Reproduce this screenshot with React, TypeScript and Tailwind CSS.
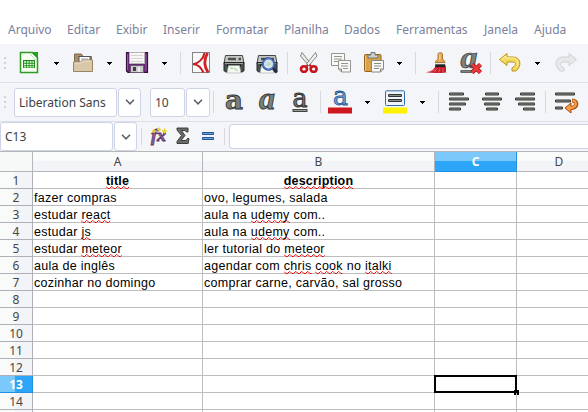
import React from "react";

const UI = "font-['Noto_Sans',sans-serif]";
const SHEET = "font-['Liberation_Sans',Arial,sans-serif]";

function Icon({ className, children }: { className: string; children: React.ReactNode }) {
  return (
    <svg viewBox="0 0 24 24" className={`h-6 w-6 shrink-0 overflow-visible ${className}`} fill="none">
      {children}
    </svg>
  );
}

function Grip() {
  return (
    <div className="ml-1 flex w-[2px] shrink-0 flex-col gap-[3px]">
      <i className="h-[2px] bg-[#d0d4e2]" />
      <i className="h-[2px] bg-[#d0d4e2]" />
      <i className="h-[2px] bg-[#d0d4e2]" />
    </div>
  );
}

function Arrow({ className }: { className: string }) {
  return (
    <svg viewBox="0 0 5 3" className={`h-[3px] w-[5px] shrink-0 ${className}`} shapeRendering="crispEdges">
      <path d="M0 0h5v1H4v1H3v1H2V2H1V1H0z" fill="#000" />
    </svg>
  );
}

function Sep({ className }: { className: string }) {
  return <div className={`w-px shrink-0 bg-[#d6d9de] ${className}`} />;
}

function Box({ className, children }: { className: string; children?: React.ReactNode }) {
  return (
    <div className={`flex shrink-0 items-center whitespace-nowrap rounded-[3px] border border-[#cdd4e6] bg-white text-[12px] text-[#3b3f4a] ${className}`}>
      {children}
    </div>
  );
}

function Chevron() {
  return (
    <svg viewBox="0 0 10 6" className="mx-auto h-[6px] w-[10px]" fill="none">
      <path d="M1 .8l4 4 4-4" stroke="#5c616c" strokeWidth="1.6" />
    </svg>
  );
}

function Lines({ rows }: { rows: [number, number, number][] }) {
  return (
    <>
      {rows.map(([x, y, w]) => (
        <g key={y}>
          <rect x={x} y={y} width={w} height="3" rx="1.2" fill="#30322f" />
          <path d={`M${x + 1} ${y + 1.5}h${w - 2}`} stroke="#8b8d88" strokeWidth="1" />
        </g>
      ))}
    </>
  );
}

function Printer() {
  return (
    <>
      <path d="M3.500 3.500h17l1.500 8H2z" fill="#c3c6c3" stroke="#444844" />
      <path d="M6 7h8M16.500 7H19" stroke="#4c514d" strokeWidth="2.500" />
      <path d="M2 10.500h20v8l-1.500 1.500h-17L2 18.500z" fill="#4a504d" stroke="#222624" />
      <path d="M3 11.500h18" stroke="#9aa19d" />
      <path d="M5 13.500h14" stroke="#151817" strokeWidth="2" />
      <path d="M6.500 13.500h11l1.500 7.500H5z" fill="#f4f7f2" stroke="#a5aaa4" strokeWidth=".6" />
      <path d="M8.500 15.500l2.500 1.500M12 16l3.500 3" stroke="#b3dcb2" strokeWidth="1.600" />
    </>
  );
}

const menus: [string, string][] = [
  ["Arquivo", "w-[59px]"],
  ["Editar", "w-[49px]"],
  ["Exibir", "w-[47px]"],
  ["Inserir", "w-[53px]"],
  ["Formatar", "w-[68px]"],
  ["Planilha", "w-[60px]"],
  ["Dados", "w-[52px]"],
  ["Ferramentas", "w-[88px]"],
  ["Janela", "w-[50px]"],
  ["Ajuda", "w-[40px]"],
];

function MenuBar() {
  return (
    <nav className="flex h-[44px] shrink-0 pl-2 pt-[20px] text-[12px] leading-[20px] text-[#7a819c]">
      {menus.map(([name, w]) => (
        <span key={name} className={`shrink-0 whitespace-nowrap ${w}`}>{name}</span>
      ))}
    </nav>
  );
}

function StandardBar() {
  return (
    <div className="flex h-[39px] shrink-0 items-center border-b border-[#dce0e9] bg-[#f4f5f8]">
      <Grip />
      <Icon className="ml-[11px]">
        <path d="M3.500 1.500h12l5 5v15h-17z" fill="#f8fff5" stroke="#2f9a25" strokeWidth="1.500" />
        <path d="M14 1h7v7z" fill="#2b9e25" />
        <path d="M12 2l8 8" stroke="#b3e2a6" />
        <rect x="6" y="9" width="12" height="8" fill="#218c19" />
        <path d="M7 11h10M7 13.500h10M7 15.800h10" stroke="#e4ffdc" strokeWidth="1.300" />
        <path d="M9.500 9v8M12.200 9v8M15 9v8" stroke="#218c19" strokeWidth=".8" />
      </Icon>
      <Arrow className="ml-[13px]" />
      <Icon className="ml-[12px]">
        <path d="M3.500 19V3h7l1.500 2.500h8.500V20z" fill="#a78f6b" stroke="#816b4c" />
        <rect x="8" y="5.500" width="11" height="8" fill="#fff" stroke="#4e5557" />
        <path d="M10 8h7" stroke="#9ca3a4" />
        <path d="M2.500 11h7l2-2h10v11.500h-19z" fill="#d8c7a8" stroke="#9b8664" />
        <path d="M3.500 12h6.500l2-2h8.500" stroke="#eee3ce" />
      </Icon>
      <Arrow className="ml-[12px]" />
      <Icon className="ml-[13px]">
        <path d="M1.500 1.500h21v20H3l-1.500-1.500z" fill="#672675" stroke="#35113f" strokeWidth="1.200" />
        <path d="M2.500 3v16M21 3v17" stroke="#9657a2" />
        <rect x="4.500" y="1.500" width="15" height="11" fill="#f7f7f6" stroke="#b8b1b9" />
        <path d="M6 4.500h12M6 7.500h12M6 10.500h12" stroke="#d5d3d3" />
        <rect x="5.500" y="14.500" width="13" height="7" fill="#c9cbc8" stroke="#6a5b6c" />
        <rect x="8" y="16" width="3" height="4" fill="#4d364f" />
        <path d="M14 16v5" stroke="#eee" strokeWidth="2" />
      </Icon>
      <Arrow className="ml-[13px]" />
      <Sep className="ml-[13px] h-[22px]" />
      <Icon className="ml-[8px]">
        <rect x="3.500" y="1.500" width="17" height="20" fill="#f9f9f9" stroke="#858585" />
        <path d="M15.500 2C14.500 8 9 12.500 4 13.500M4 13c6 .5 8 4 10.500 8.500" stroke="#c61c20" strokeWidth="2" />
        <path d="M18.500 2C15 8 15 15 19 21.500" stroke="#ce2226" strokeWidth="2.800" />
      </Icon>
      <Icon className="ml-[9px]"><g transform="translate(0 1)"><Printer /></g></Icon>
      <Icon className="ml-[9px]">
        <g transform="translate(0 1)"><Printer /></g>
        <circle cx="13.500" cy="13" r="5.700" fill="#d6e5f6" fillOpacity=".95" stroke="#234a9b" strokeWidth="2" />
        <circle cx="13.500" cy="13" r="5.500" stroke="#7f9fd8" strokeWidth=".7" />
        <path d="M11.500 14l2-3 2.500 2-2 2z" fill="#b5dcac" />
        <path d="M18 17.500l4 4" stroke="#202c46" strokeWidth="2.600" />
      </Icon>
      <Sep className="ml-[8px] h-[22px]" />
      <Icon className="ml-[9px]">
        <path d="M5 1.500L3.500 5l8.500 10 2-2z" fill="#e8eae7" stroke="#83887f" />
        <path d="M18.500 1.500L20 5l-8.500 10-2-2z" fill="#f1f3f0" stroke="#83887f" />
        <ellipse cx="7" cy="18" rx="3" ry="2.800" stroke="#c9141b" strokeWidth="2.600" />
        <ellipse cx="16.600" cy="18" rx="3" ry="2.800" stroke="#c9141b" strokeWidth="2.600" />
        <path d="M9 16l2-2M14.500 16l-2-2" stroke="#bd2026" strokeWidth="2" />
      </Icon>
      <Icon className="ml-[8px]">
        <path d="M2.500 2.500h13v12h-13z" fill="#f9f9f8" stroke="#939591" />
        <path d="M5 5.500h8M5 8h8M5 10.500h6" stroke="#92948f" />
        <path d="M9.500 9.500h12V21h-9l-3-3z" fill="#f9f9f8" stroke="#939591" />
        <path d="M12 12.500h7M12 15h7M14 17.500h5" stroke="#92948f" />
        <path d="M9.500 18h3v3" stroke="#838580" />
      </Icon>
      <Icon className="ml-[9px]">
        <rect x="2.500" y="3.500" width="16.500" height="17" rx="1" fill="#d9a14b" stroke="#92611d" />
        <path d="M3.500 5v14.500" stroke="#efc57e" />
        <path d="M6 7V4h3V1.500h4V4h3v3z" fill="#cdd0cd" stroke="#70746e" />
        <path d="M9.500 9.500h12V18l-3 3h-9z" fill="#fafaf9" stroke="#868883" />
        <path d="M12 12.500h7M12 15h7M12 17.500h5" stroke="#888a85" />
        <path d="M21.500 18h-3v3" stroke="#868883" />
      </Icon>
      <Arrow className="ml-[11px]" />
      <Sep className="ml-[13px] h-[22px]" />
      <Icon className="ml-[8px]">
        <path d="M1.500 21c4 0 7-1 10-5.500h10.500v6c-6 .8-14 .8-20.500-.5z" fill="#c51e2c" />
        <path d="M5 21l6-2.500M10 21.500l3-4M14.500 21.500l1.500-4M19 21.500v-4" stroke="#f0646a" strokeWidth=".9" />
        <path d="M11 16l.5-4H21l.5 4z" fill="#202322" />
        <path d="M11.300 12.500h10" stroke="#e9e9e4" strokeWidth="1.600" />
        <path d="M11.500 11.500c0-2.500 2-2 2.500-3.500V3.500c0-2.500 4.500-2.500 4.500 0V8c.5 1.500 2.500 1 2.500 3.500z" fill="#e4a653" stroke="#a36c26" strokeWidth=".9" />
        <path d="M15.800 3v6.500" stroke="#f8dca4" />
      </Icon>
      <Icon className="ml-[11px]">
        <text x="1.500" y="17" fontFamily="Liberation Serif, serif" fontStyle="italic" fontWeight="bold" fontSize="31" textLength="17" lengthAdjust="spacingAndGlyphs" fill="#7d827f" stroke="#303432" strokeWidth=".7">a</text>
        <path d="M1.500 20.500h12" stroke="#3f4341" strokeWidth="2.600" />
        <path d="M2.500 20.500h9" stroke="#929692" strokeWidth=".8" />
        <path d="M13 13.500l8.500 8M21.500 13.500l-8.500 8" stroke="#9f0b11" strokeWidth="4.400" />
        <path d="M13 13.500l8.500 8M21.500 13.500l-8.500 8" stroke="#ed3939" strokeWidth="2.800" />
      </Icon>
      <Sep className="ml-[7px] h-[22px]" />
      <Icon className="ml-[7px]">
        <path d="M1.500 8.500L9 2.500V6h6c8 0 9 9 3 14h-4v-3c5-3 4-6 1-6H9v3.500z" fill="#f4d85e" stroke="#bb9318" strokeLinejoin="round" />
        <path d="M3.500 8.500L8 5v2h7c5 0 6 5 4 8" stroke="#fff3ad" />
      </Icon>
      <Arrow className="ml-[13px]" />
      <Icon className="ml-[14px]">
        <path d="M22.500 8.500L15 2.500V6H9C1 6 0 15 6 20h4v-3c-5-3-4-6-1-6h6v3.500z" fill="#e7e8ea" stroke="#cfd1d4" strokeLinejoin="round" />
      </Icon>
    </div>
  );
}

function FormatBar() {
  const a = { fontFamily: "DejaVu Serif, serif", fontWeight: "bold" as const, fill: "#7b7f7b", stroke: "#2f3230", strokeWidth: 0.8 };
  return (
    <div className="flex h-[39px] shrink-0 items-center border-b border-[#dce0e9] bg-[#f4f5f8]">
      <Grip />
      <Box className="ml-[8px] h-[29px] w-[103px] pl-1 pt-px">Liberation Sans</Box>
      <Box className="ml-px h-[29px] w-[23px]"><Chevron /></Box>
      <Box className="ml-[9px] h-[29px] w-[35px] pl-1 pt-px">10</Box>
      <Box className="ml-px h-[29px] w-[24px]"><Chevron /></Box>
      <Sep className="ml-[3px] h-[22px]" />
      <Icon className="ml-[8px]">
        <text x="3" y="18.500" {...a} fontSize="26" textLength="18" lengthAdjust="spacingAndGlyphs">a</text>
      </Icon>
      <Icon className="ml-[9px]">
        <text x="4" y="18.500" {...a} fontFamily="Liberation Serif, serif" fontStyle="italic" fontSize="31" textLength="16" lengthAdjust="spacingAndGlyphs">a</text>
      </Icon>
      <Icon className="ml-[9px]">
        <text x="4.500" y="17" {...a} strokeWidth="1" fontWeight="normal" fontSize="26" textLength="15" lengthAdjust="spacingAndGlyphs">a</text>
        <path d="M4.500 20.500h15" stroke="#424643" strokeWidth="3" />
        <path d="M5.500 20.500h13" stroke="#989b97" />
      </Icon>
      <Sep className="ml-[8px] h-[22px]" />
      <Icon className="ml-[7px]">
        <text x="5" y="15" {...a} fontWeight="normal" fontSize="26" textLength="15" lengthAdjust="spacingAndGlyphs" fill="#69a1df" stroke="#245591">a</text>
        <path d="M0 17.500h24v6H0z" fill="#ce181e" />
      </Icon>
      <Arrow className="ml-[13px]" />
      <Icon className="ml-[13px]">
        <rect x="2.500" y=".8" width="19" height="14.700" rx="1" fill="#eef4fb" stroke="#356ba7" />
        <Lines rows={[[5, 4, 14], [5, 9, 14]]} />
        <path d="M0 17.500h24v6H0z" fill="#fff200" />
      </Icon>
      <Arrow className="ml-[13px]" />
      <Sep className="ml-[13px] h-[22px]" />
      <Icon className="ml-[8px]"><Lines rows={[[2, 2.5, 15], [2, 7.5, 20], [2, 12.5, 17], [2, 17.5, 12]]} /></Icon>
      <Icon className="ml-[9px]"><Lines rows={[[5, 2.5, 14], [2, 7.5, 20], [4, 12.5, 16], [6, 17.5, 12]]} /></Icon>
      <Icon className="ml-[9px]"><Lines rows={[[7, 2.5, 15], [2, 7.5, 20], [5, 12.5, 17], [10, 17.5, 12]]} /></Icon>
      <Sep className="ml-[8px] h-[22px]" />
      <Icon className="ml-[8px]">
        <Lines rows={[[1, 2.5, 20], [1, 9.5, 16], [1, 16.5, 8]]} />
        <path d="M18 10.500c6 0 6 7.500-2 7.500" stroke="#a7490b" strokeWidth="4.200" />
        <path d="M11 18l6-5v10z" fill="#f59b42" stroke="#a7490b" />
        <path d="M18.500 10.500c5 .5 5 7.500-3.500 7.500" stroke="#f7a24b" strokeWidth="2.300" />
      </Icon>
    </div>
  );
}

function FormulaBar() {
  return (
    <div className="flex h-[29px] shrink-0 items-start bg-[#f4f5f8]">
      <Box className="h-[29px] w-[113px] pl-1">C13</Box>
      <Box className="ml-px h-[29px] w-[23px]"><Chevron /></Box>
      <Sep className="ml-1 mt-1.5 h-[17px]" />
      <svg viewBox="0 0 18 18" className="ml-[8px] mt-[5px] h-[18px] w-[18px] shrink-0 overflow-visible" fill="none">
        <text x="1" y="14" fontFamily="Liberation Serif, serif" fontStyle="italic" fontWeight="bold" fontSize="17" textLength="15" lengthAdjust="spacingAndGlyphs" fill="#92629a" stroke="#5c3566" strokeWidth=".8">fx</text>
        <path d="M2 4h4M4 2v4M7 2.500h4M9 .5v4M12 4h5M14.500 1.500v5" stroke="#eccf35" strokeWidth="1.400" />
      </svg>
      <svg viewBox="0 0 14 18" className="ml-[8px] mt-[5px] h-[18px] w-[14px] shrink-0">
        <path d="M1 1h11v4h-1.500L9 3.500H5.500L9 8.500l-4 5h5l1.500-2H13l-.8 5H1v-2l4.500-6L1 3z" fill="#6a6d6a" stroke="#303330" strokeWidth=".9" />
      </svg>
      <svg viewBox="0 0 12 8" className="ml-[12px] mt-[10px] h-[8px] w-[12px] shrink-0">
        <path d="M.5.500h11v2H.5zM.5 5.500h11v2H.5z" fill="#6ba0da" stroke="#20559a" />
      </svg>
      <Sep className="ml-[10px] mt-1.5 h-[17px]" />
      <div className="ml-1 mt-[2px] h-[25px] grow rounded-l-[4px] border border-r-0 border-[#ccd3e6] bg-white" />
    </div>
  );
}

function Wavy({ children }: { children: string }) {
  return (
    <span className="relative inline-block">
      {children}
      <svg className="absolute left-0 top-[14px] z-10 h-[3px] w-full">
        <defs>
          <pattern id="squiggle" width="6" height="3" patternUnits="userSpaceOnUse">
            <path d="M-1.500 .5H0L2 2.500H3.500L5.500 .5H7" stroke="#f20000" strokeWidth="1" fill="none" />
          </pattern>
        </defs>
        <rect width="100%" height="3" fill="url(#squiggle)" />
      </svg>
    </span>
  );
}

const data: Record<number, [React.ReactNode, React.ReactNode]> = {
  1: [<Wavy>title</Wavy>, <Wavy>description</Wavy>],
  2: ["fazer compras", "ovo, legumes, salada"],
  3: [<>estudar <Wavy>react</Wavy></>, <>aula na <Wavy>udemy</Wavy> com..</>],
  4: [<>estudar <Wavy>js</Wavy></>, <>aula na <Wavy>udemy</Wavy> com..</>],
  5: [<>estudar <Wavy>meteor</Wavy></>, <>ler tutorial do <Wavy>meteor</Wavy></>],
  6: ["aula de inglês", <>agendar com <Wavy>chris</Wavy> <Wavy>cook</Wavy> no <Wavy>italki</Wavy></>],
  7: ["cozinhar no domingo", "comprar carne, carvão, sal grosso"],
};

function ColumnHead({ name, className }: { name: string; className: string }) {
  const active = name === "C";
  return (
    <div
      className={`flex h-5 shrink-0 items-center justify-center border-b border-r text-[12px] ${className} ${
        active
          ? "border-[#2390e0] bg-[linear-gradient(#7bc8fb_50%,#2da5f8_50%)] font-bold text-white"
          : "border-[#b4b6bb] bg-[linear-gradient(#f9fbfa_50%,#f3f4f7_50%)] text-[#464646]"
      }`}
    >
      {name}
    </div>
  );
}

function Row({ n }: { n: number }) {
  const active = n === 13;
  const [a, b] = data[n] ?? [null, null];
  const cell = `h-[17px] shrink-0 whitespace-pre border-b border-r border-[#bdbdbd] leading-[19px] text-black ${SHEET}`;
  const align = n === 1 ? "text-center text-[12.5px] font-bold tracking-[0.2px]" : "pl-px text-[12.5px] tracking-[0.28px]";
  return (
    <div className="flex h-[17px] shrink-0">
      <div
        className={`h-[17px] w-[33px] shrink-0 border-b border-r text-center text-[12px] leading-[18px] ${
          active
            ? "border-[#2390e0] bg-[linear-gradient(90deg,#7bc8fb_48%,#2da5f8_48%)] font-bold text-white"
            : "border-[#aeb0b7] bg-[linear-gradient(90deg,#f9fbfa_48%,#f3f4f7_48%)] text-[#464646]"
        }`}
      >
        {n <= 14 && n}
      </div>
      <div className={`${cell} ${align} w-[170px]`}>{a}</div>
      <div className={`${cell} ${align} w-[232px]`}>{b}</div>
      <div className={`${cell} relative w-[82px]`}>
        {active && (
          <div className="absolute -left-px -top-px h-[18px] w-[83px] border-2 border-black">
            <i className="absolute -bottom-[4px] -right-[4px] h-[5px] w-[5px] bg-black" />
          </div>
        )}
      </div>
      <div className={`${cell} w-[90px]`} />
    </div>
  );
}

export default function App() {
  return (
    <div className={`flex h-[412px] w-[588px] flex-col overflow-hidden bg-white ${UI}`}>
      <MenuBar />
      <StandardBar />
      <FormatBar />
      <FormulaBar />
      <div className="flex shrink-0 border-t border-[#b4b6b8]">
        <div className="h-5 w-[33px] shrink-0 border-b border-r border-[#b4b6bb] bg-[#f7f9f9]" />
        <ColumnHead name="A" className="w-[170px]" />
        <ColumnHead name="B" className="w-[232px]" />
        <ColumnHead name="C" className="w-[82px]" />
        <ColumnHead name="D" className="w-[85px]" />
      </div>
      {Array.from({ length: 15 }, (_, i) => (
        <Row key={i} n={i + 1} />
      ))}
    </div>
  );
}
